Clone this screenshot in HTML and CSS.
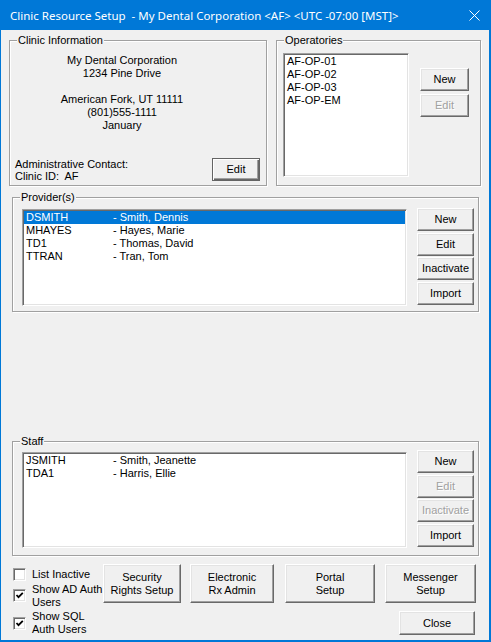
FILE: index.html
```html
<!DOCTYPE html>
<html>
<head>
<meta name="viewport" content="width=device-width, initial-scale=1">
<link rel="stylesheet" href="styles.css">
</head>
<body>

<div class="window">
  <div class="titlebar">
    <span class="title">Clinic Resource Setup  - My Dental Corporation &lt;AF&gt; &lt;UTC -07:00 [MST]&gt;</span>
    <svg class="close-x" width="11" height="11" viewBox="0 0 11 11">
      <path d="M0.5 0.5 L10.5 10.5 M10.5 0.5 L0.5 10.5" stroke="#fff" stroke-width="1" fill="none"/>
    </svg>
  </div>

  <div class="client">
    <div class="top-row">
      <div class="group clinic">
        <span class="group-title">Clinic Information</span>
        <div class="address">
          <div>My Dental Corporation</div>
          <div>1234 Pine Drive</div>
          <div>&nbsp;</div>
          <div>American Fork, UT 11111</div>
          <div>(801)555-1111</div>
          <div>January</div>
        </div>
        <div class="clinic-foot">
          <div class="contact">
            <div>Administrative Contact:</div>
            <div>Clinic ID:&nbsp; AF</div>
          </div>
          <button class="btn default clinic-edit">Edit</button>
        </div>
      </div>

      <div class="group operatories">
        <span class="group-title">Operatories</span>
        <div class="listbox op-list">
          <div class="row">AF-OP-01</div>
          <div class="row">AF-OP-02</div>
          <div class="row">AF-OP-03</div>
          <div class="row">AF-OP-EM</div>
        </div>
        <div class="op-buttons">
          <button class="btn">New</button>
          <button class="btn" disabled>Edit</button>
        </div>
      </div>
    </div>

    <div class="group people providers">
      <span class="group-title">Provider(s)</span>
      <div class="listbox people-list">
        <div class="row person selected"><span>DSMITH</span><span>- Smith, Dennis</span></div>
        <div class="row person"><span>MHAYES</span><span>- Hayes, Marie</span></div>
        <div class="row person"><span>TD1</span><span>- Thomas, David</span></div>
        <div class="row person"><span>TTRAN</span><span>- Tran, Tom</span></div>
      </div>
      <div class="side-buttons">
        <button class="btn">New</button>
        <button class="btn">Edit</button>
        <button class="btn">Inactivate</button>
        <button class="btn">Import</button>
      </div>
    </div>

    <div class="group people staff">
      <span class="group-title">Staff</span>
      <div class="listbox people-list">
        <div class="row person"><span>JSMITH</span><span>- Smith, Jeanette</span></div>
        <div class="row person"><span>TDA1</span><span>- Harris, Ellie</span></div>
      </div>
      <div class="side-buttons">
        <button class="btn">New</button>
        <button class="btn" disabled>Edit</button>
        <button class="btn" disabled>Inactivate</button>
        <button class="btn">Import</button>
      </div>
    </div>

    <div class="bottom">
      <div class="checks">
        <label class="check">
          <span class="box"></span>
          <span class="check-label">List Inactive</span>
        </label>
        <label class="check">
          <span class="box"><svg width="9" height="9" viewBox="0 0 9 9"><path d="M1.5 4 L3.5 6.2 L7.8 1.8" stroke="#000" stroke-width="1.8" fill="none"/></svg></span>
          <span class="check-label">Show AD Auth<br>Users</span>
        </label>
        <label class="check">
          <span class="box"><svg width="9" height="9" viewBox="0 0 9 9"><path d="M1.5 4 L3.5 6.2 L7.8 1.8" stroke="#000" stroke-width="1.8" fill="none"/></svg></span>
          <span class="check-label">Show SQL<br>Auth Users</span>
        </label>
      </div>

      <div class="actions">
        <div class="action-row">
          <button class="btn tall security">Security<br>Rights Setup</button>
          <button class="btn tall erx">Electronic<br>Rx Admin</button>
          <button class="btn tall portal">Portal<br>Setup</button>
          <button class="btn tall messenger">Messenger<br>Setup</button>
        </div>
        <div class="close-row">
          <button class="btn close-btn">Close</button>
        </div>
      </div>
    </div>
  </div>
</div>

</body>
</html>
```

FILE: styles.css
```css
body {
    margin: 0;
    font-family: "Liberation Sans", Arial, sans-serif;
    font-size: 11px;
    color: #000;
}

.window {
    width: 491px;
    height: 642px;
    box-sizing: border-box;
    background-color: #0078d7;
    padding: 0 2px 2px 1px;
    display: flex;
    flex-direction: column;
}

.titlebar {
    height: 30px;
    display: flex;
    align-items: center;
    padding-left: 9px;
    color: white;
    flex-shrink: 0;
}

.title {
    font-family: "Noto Sans", sans-serif;
    font-size: 11.5px;
    white-space: pre;
}

.close-x {
    margin-left: auto;
    margin-right: 9px;
}

.client {
    flex: 1;
    background-color: #f0f0f0;
}

/* group boxes */
.group {
    position: relative;
    box-sizing: border-box;
    border: 1px solid #a0a0a0;
    box-shadow: inset 1px 1px 0 #fff, 1px 1px 0 #fff;
}

.group-title {
    position: absolute;
    top: -7px;
    left: 7px;
    padding: 0 1px;
    line-height: 13px;
    background-color: #f0f0f0;
}

.top-row {
    display: flex;
    gap: 9px;
    padding: 10px 0 0 8px;
}

.clinic {
    width: 258px;
    height: 146px;
    display: flex;
    flex-direction: column;
    justify-content: space-between;
}

.address {
    width: 224px;
    padding-top: 13px;
    text-align: center;
    line-height: 13px;
}

.clinic-foot {
    display: flex;
    justify-content: space-between;
    align-items: flex-end;
    padding: 0 6px 3px 5px;
    line-height: 12px;
}

.clinic-edit {
    width: 48px;
    height: 23px;
    margin-bottom: 1px;
}

.operatories {
    width: 205px;
    height: 146px;
    display: flex;
    align-items: flex-start;
    padding: 12px 0 0 6px;
}

.op-list {
    width: 126px;
    height: 124px;
}

.op-buttons {
    display: flex;
    flex-direction: column;
    gap: 3px;
    margin: 15px 0 0 11px;
}

.op-buttons .btn {
    width: 49px;
    height: 23px;
}

/* list boxes */
.listbox {
    box-sizing: border-box;
    background-color: #fff;
    border: 1px solid;
    border-color: #a0a0a0 #fff #fff #a0a0a0;
    box-shadow: inset 1px 1px 0 #696969, inset -1px -1px 0 #e3e3e3;
    padding: 1px;
    line-height: 13px;
}

.row {
    height: 13px;
    padding-left: 2px;
    white-space: nowrap;
}

.person {
    display: grid;
    grid-template-columns: 87px 1fr;
}

.selected {
    background-color: #0078d7;
    color: #fff;
}

/* providers and staff */
.people {
    width: 467px;
    height: 115px;
    margin-left: 11px;
    display: flex;
    align-items: flex-start;
    padding: 10px 0 0 9px;
}

.providers {
    margin-top: 11px;
}

.staff {
    margin-top: 129px;
    padding-top: 8px;
}

.people-list {
    width: 385px;
    height: 97px;
    margin-top: 1px;
}

.staff .people-list {
    height: 96px;
    margin-top: 2px;
}

.side-buttons {
    display: flex;
    flex-direction: column;
    gap: 1.5px;
    margin-left: 10px;
}

.side-buttons .btn {
    width: 57px;
    height: 23px;
}

/* buttons */
.btn {
    box-sizing: border-box;
    font-family: "Liberation Sans", Arial, sans-serif;
    font-size: 11px;
    line-height: 13px;
    color: #000;
    background-color: #f0f0f0;
    border: 1px solid;
    border-color: #fff #696969 #696969 #fff;
    box-shadow: inset -1px -1px 0 #a0a0a0, inset 1px 1px 0 #e3e3e3;
    padding: 0;
    cursor: pointer;
}

.btn.default {
    border-color: #646464;
    box-shadow: inset 1px 1px 0 #fff, inset -1px -1px 0 #696969, inset -2px -2px 0 #a0a0a0;
}

.btn:disabled {
    color: #a0a0a0;
    text-shadow: 1px 1px 0 #fff;
    cursor: default;
}

/* bottom strip */
.bottom {
    display: flex;
    margin-top: 8px;
}

.checks {
    width: 90px;
    padding: 4px 0 0 12px;
    display: flex;
    flex-direction: column;
    gap: 1.5px;
}

.check {
    display: flex;
    align-items: center;
    gap: 6px;
    line-height: 13px;
    white-space: nowrap;
}

.box {
    width: 13px;
    height: 13px;
    box-sizing: border-box;
    flex-shrink: 0;
    background-color: #fff;
    border: 1px solid;
    border-color: #a0a0a0 #fff #fff #a0a0a0;
    box-shadow: inset 1px 1px 0 #696969, inset -1px -1px 0 #e3e3e3;
    display: flex;
    align-items: center;
    justify-content: center;
}

.box svg {
    display: block;
}

.actions {
    display: flex;
    flex-direction: column;
}

.action-row {
    display: flex;
}

.tall {
    height: 39px;
}

.security { width: 78px; }
.erx { width: 84px; margin-left: 9px; }
.portal { width: 90px; margin-left: 11px; }
.messenger { width: 91px; margin-left: 10px; }

.close-row {
    display: flex;
    justify-content: flex-end;
    margin-top: 8px;
}

.close-btn {
    width: 76px;
    height: 24px;
    margin-right: 1px;
}
```
